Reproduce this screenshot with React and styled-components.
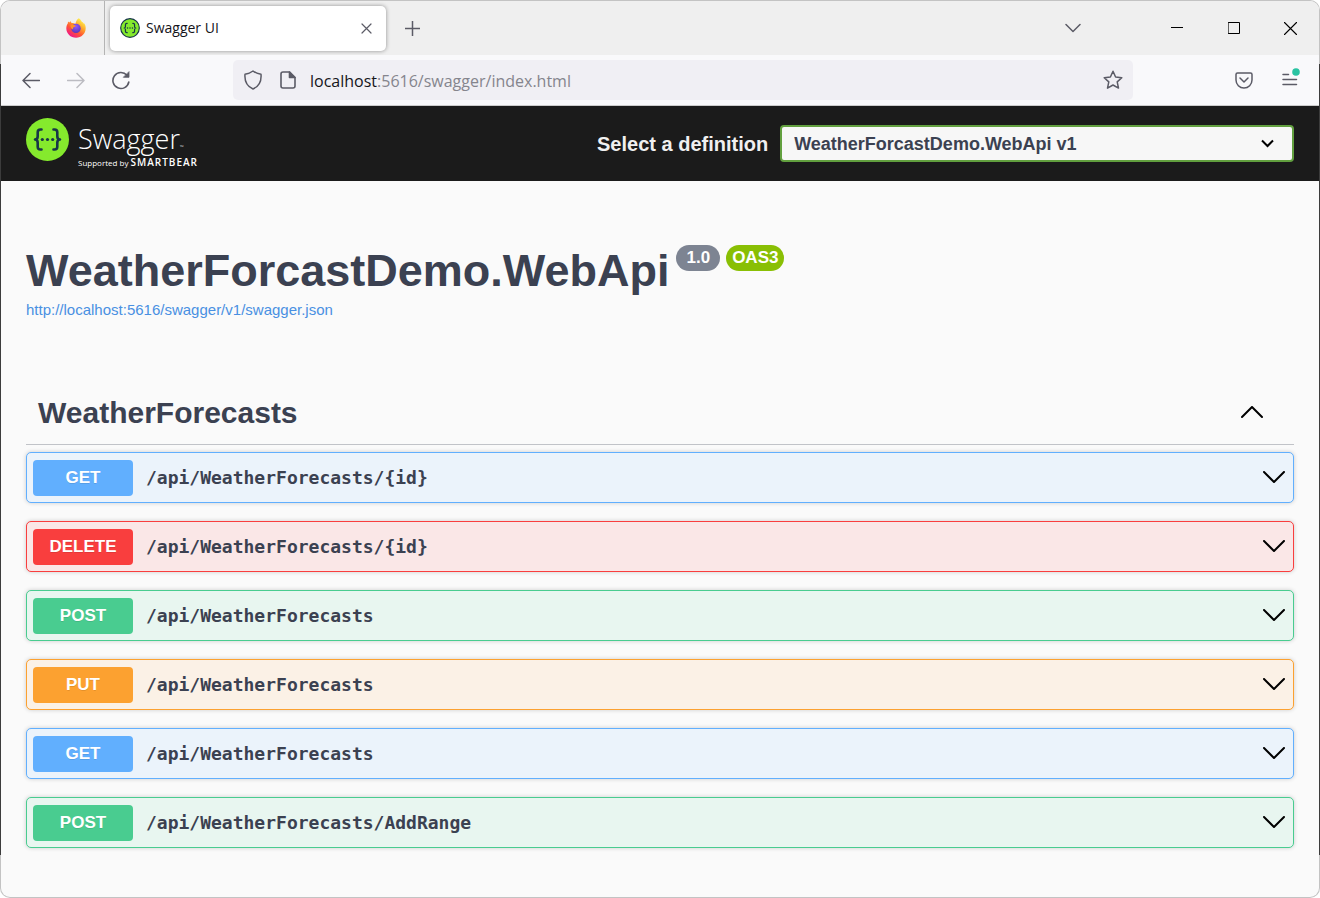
import { useState } from "react";
import styled, { createGlobalStyle } from "styled-components";

const GlobalStyle = createGlobalStyle`
  * {
    box-sizing: border-box;
  }
  body {
    margin: 0;
    background: #fff;
    color: #3b4151;
    font-family: "Liberation Sans", Arial, sans-serif;
  }
  button, input, select {
    font-family: inherit;
  }
`;

/* BROWSER WINDOW */

const Window = styled.div`
  display: flex;
  min-height: 100vh;
  padding: 1px;
  border-radius: 10px;
  background: linear-gradient(
    #c3c3c3 64px,
    #3c3c3c 64px,
    #3c3c3c calc(100% - 43px),
    #c3c3c3 calc(100% - 43px)
  );
`;

const WindowBody = styled.div`
  flex: 1;
  min-width: 0;
  display: flex;
  flex-direction: column;
  overflow: hidden;
  border-radius: 9px;
  background: #fafafa;
`;

const TabBar = styled.div`
  display: flex;
  align-items: center;
  height: 54px;
  background: #efefef;
`;

const PinnedTab = styled.div`
  display: flex;
  align-items: center;
  justify-content: flex-end;
  width: 104px;
  height: 100%;
  padding-right: 18px;
  border-right: 1px solid #b4b4b4;
`;

const Tab = styled.div`
  display: flex;
  align-items: center;
  gap: 6px;
  width: 276px;
  height: 45px;
  margin-left: 5px;
  padding: 0 12px 0 10px;
  border-radius: 5px;
  background: #fff;
  box-shadow: 0 0 4px rgba(0, 0, 0, 0.4);
`;

const TabTitle = styled.span`
  flex: 1;
  color: #15141a;
  font-family: "Open Sans", sans-serif;
  font-size: 14px;
  line-height: 20px;
`;

const IconButton = styled.button`
  display: flex;
  align-items: center;
  justify-content: center;
  flex: none;
  width: ${({ $width }) => $width || 20}px;
  height: 30px;
  padding: 0;
  border: none;
  background: none;
  color: ${({ $color }) => $color || "#5b5b66"};
`;

const TabActions = styled.div`
  display: flex;
  flex: 1;
  align-items: center;
  justify-content: space-between;
  padding-left: 12px;
`;

const WindowControls = styled.div`
  display: flex;
  align-items: center;
`;

const Toolbar = styled.div`
  display: flex;
  align-items: center;
  height: 51px;
  padding: 0 19px 0 7px;
  border-bottom: 1px solid #cccccc;
  background: #f9f9fb;
`;

const NavButtons = styled.div`
  display: flex;
  width: 225px;
`;

const AddressBar = styled.form`
  display: flex;
  flex: 1;
  align-items: center;
  height: 40px;
  padding: 0 10px;
  gap: 12px;
  border-radius: 5px;
  background: #f0eff4;
`;

const SiteButtons = styled.div`
  display: flex;
  gap: 15px;
`;

const Address = styled.a`
  flex: 1;
  padding-top: 2px;
  color: #85858d;
  font-family: "Open Sans", sans-serif;
  font-size: 16px;
  line-height: 24px;
  text-decoration: none;
  strong {
    color: #15141a;
    font-weight: 400;
  }
`;

const ToolbarMenu = styled.div`
  display: flex;
  gap: 26px;
  margin-left: 101px;
`;

/* SWAGGER PAGE */

const Topbar = styled.header`
  display: flex;
  align-items: center;
  justify-content: space-between;
  height: 75px;
  padding: 0 25px;
  background: #1b1b1b;
`;

const Brand = styled.a`
  display: flex;
  gap: 9px;
  color: #fff;
  text-decoration: none;
  font-family: "Open Sans", sans-serif;
`;

const BrandText = styled.span`
  display: flex;
  flex-direction: column;
  padding-top: 2px;
`;

const BrandName = styled.span`
  font-size: 27px;
  font-weight: 300;
  line-height: 37px;
  small {
    font-size: 5px;
    line-height: 1;
  }
`;

const BrandSupport = styled.span`
  font-size: 8px;
  line-height: 12px;
  white-space: nowrap;
  strong {
    font-size: 10px;
    font-weight: 600;
    line-height: 1;
    letter-spacing: 1px;
  }
`;

const DefinitionForm = styled.form`
  display: flex;
  align-items: center;
  gap: 12px;
  width: 697px;
`;

const DefinitionLabel = styled.label`
  color: #f0f0f0;
  font-size: 20px;
  font-weight: 700;
  line-height: 24px;
  white-space: nowrap;
`;

const SelectBox = styled.div`
  display: grid;
  flex: 1;
  align-items: center;
  svg {
    grid-area: 1 / 1;
    justify-self: end;
    margin-right: 20px;
    pointer-events: none;
  }
`;

const DefinitionSelect = styled.select`
  grid-area: 1 / 1;
  width: 100%;
  height: 37px;
  padding: 0 40px 0 12px;
  appearance: none;
  border: 2px solid #62a03f;
  border-radius: 4px;
  background: #f7f7f7;
  color: #3b4151;
  font-size: 18px;
  font-weight: 700;
`;

const Content = styled.main`
  display: flex;
  flex-direction: column;
  padding: 62px 25px 48px;
`;

const Info = styled.section`
  display: flex;
  flex-direction: column;
  align-items: flex-start;
`;

const TitleRow = styled.div`
  display: flex;
  gap: 7px;
`;

const Title = styled.h1`
  margin: 0;
  font-size: 45px;
  font-weight: 700;
  line-height: 56px;
`;

const Badges = styled.div`
  display: flex;
  gap: 6px;
  padding-top: 2px;
`;

const Badge = styled.span`
  height: 26px;
  padding: 0 ${({ $wide }) => ($wide ? 10 : 6)}px;
  border-radius: 26px;
  background: ${({ $color }) => $color};
  color: #fff;
  font-size: 17px;
  font-weight: 700;
  line-height: 26px;
`;

const SpecLink = styled.a`
  color: #4990e2;
  font-size: 15px;
  line-height: 22px;
  text-decoration: none;
`;

const TagHeader = styled.div`
  display: flex;
  align-items: center;
  justify-content: space-between;
  height: 63px;
  margin-top: 61px;
  padding: 0 30px 0 12px;
  border-bottom: 1px solid #c1c3c8;
`;

const TagTitle = styled.h2`
  margin: 0;
  font-size: 30px;
  font-weight: 700;
  line-height: 36px;
`;

const Operations = styled.ul`
  display: flex;
  flex-direction: column;
  gap: 18px;
  margin: 0;
  padding: 7px 0 0;
  list-style: none;
`;

const Operation = styled.li`
  border: 1px solid ${({ $color }) => $color};
  border-radius: 5px;
  background: ${({ $tint }) => $tint};
  box-shadow: 0 0 4px rgba(0, 0, 0, 0.19);
`;

const OperationButton = styled.button`
  display: flex;
  align-items: center;
  gap: 13px;
  width: 100%;
  height: 49px;
  padding: 0 8px 0 6px;
  border: none;
  background: none;
  color: #3b4151;
  text-align: left;
`;

const Method = styled.span`
  width: 100px;
  border-radius: 4px;
  background: ${({ $color }) => $color};
  color: #fff;
  font-size: 17px;
  font-weight: 700;
  line-height: 36px;
  text-align: center;
  text-shadow: 0 1px 0 rgba(0, 0, 0, 0.1);
`;

const Path = styled.span`
  flex: 1;
  font-family: "DejaVu Sans Mono", monospace;
  font-size: 18px;
  font-weight: 700;
  line-height: 24px;
`;

const METHODS = {
  GET: { color: "#61affe", tint: "#ebf3fb" },
  DELETE: { color: "#f93e3e", tint: "#fae7e7" },
  POST: { color: "#49cc90", tint: "#e8f6f0" },
  PUT: { color: "#fca130", tint: "#fbf1e6" },
};

const OPERATIONS = [
  { method: "GET", path: "/api/WeatherForecasts/{id}" },
  { method: "DELETE", path: "/api/WeatherForecasts/{id}" },
  { method: "POST", path: "/api/WeatherForecasts" },
  { method: "PUT", path: "/api/WeatherForecasts" },
  { method: "GET", path: "/api/WeatherForecasts" },
  { method: "POST", path: "/api/WeatherForecasts/AddRange" },
];

const ICONS = {
  close: "M1 1l9 9M10 1L1 10",
  plus: "M7.5 0v15M0 7.5h15",
  down: "M1 1.5l7 7 7-7",
  minimize: "M0 5.5h12",
  maximize: "M.5.5h11v11H.5z",
  exit: "M.5.5l12 12M12.5.5l-12 12",
  back: "M17.5 8.5H1M8 1.5l-7 7 7 7",
  forward: "M.5 8.5H17M10 1.5l7 7-7 7",
  shield: "M9 1c2.3 1.8 5 2.8 8 3.2C17.6 11 14.5 16.5 9 19 3.5 16.5.4 11 1 4.2 4 3.8 6.7 2.8 9 1z",
  star: "M10 1.2l2.6 5.8 6.2.7-4.6 4.2 1.3 6.2L10 15l-5.5 3.1 1.3-6.2L1.2 7.7l6.2-.7z",
};

function Icon({ name, width, height, stroke = 1.5 }) {
  return (
    <svg
      width={width}
      height={height}
      viewBox={`0 0 ${width} ${height}`}
      fill="none"
      stroke="currentColor"
      strokeWidth={stroke}
      strokeLinecap="round"
      strokeLinejoin="round"
      aria-hidden="true"
    >
      <path d={ICONS[name]} />
    </svg>
  );
}

function Chevron({ up }) {
  return (
    <svg
      width="22"
      height="14"
      viewBox="0 0 22 14"
      fill="none"
      stroke="#000"
      strokeWidth="2"
      strokeLinecap="round"
      strokeLinejoin="round"
      aria-hidden="true"
    >
      <path d={up ? "M1 11L11 1l10 10" : "M1 1l10 10L21 1"} />
    </svg>
  );
}

function SwaggerMark({ size, outlined }) {
  return (
    <svg width={size} height={size} viewBox="0 0 43 43" aria-hidden="true">
      <circle
        cx="21.5"
        cy="21.5"
        r={outlined ? 20 : 21.5}
        fill="#85ea2d"
        stroke={outlined ? "#173647" : "none"}
        strokeWidth="2.5"
      />
      <g fill="none" stroke="#173647" strokeWidth="2.6" strokeLinecap="round" strokeLinejoin="round">
        <path d="M15.5 11.5h-1c-2 0-2.8 1-2.8 2.8v4c0 2-1 3.2-2.7 3.2 1.7 0 2.7 1.2 2.7 3.2v4c0 1.8.8 2.8 2.8 2.8h1" />
        <path d="M27.5 11.5h1c2 0 2.8 1 2.8 2.8v4c0 2 1 3.2 2.7 3.2-1.7 0-2.7 1.2-2.7 3.2v4c0 1.8-.8 2.8-2.8 2.8h-1" />
      </g>
      <g fill="#173647">
        <circle cx="16.3" cy="21.5" r="1.6" />
        <circle cx="21.5" cy="21.5" r="1.6" />
        <circle cx="26.7" cy="21.5" r="1.6" />
      </g>
    </svg>
  );
}

function FirefoxLogo() {
  return (
    <svg width="20" height="20" viewBox="0 0 20 20" aria-label="Firefox">
      <defs>
        <linearGradient id="flame" x1=".85" y1=".1" x2=".25" y2=".95">
          <stop offset="0" stopColor="#fff44f" />
          <stop offset=".35" stopColor="#ffa62b" />
          <stop offset=".65" stopColor="#ff5535" />
          <stop offset="1" stopColor="#f0158a" />
        </linearGradient>
        <radialGradient id="globe" cx=".5" cy=".3" r=".7">
          <stop offset="0" stopColor="#9059ff" />
          <stop offset="1" stopColor="#5b35b5" />
        </radialGradient>
      </defs>
      <path
        fill="url(#flame)"
        d="M12.8.2c1.5 1 2.5 2.4 3 3.6 1 .4 1.6 1.2 2 1.9.2-.1.2-.4.1-.7 1.3 1.4 1.9 3.4 1.8 5.5-.2 5.2-4.3 9.3-9.6 9.3C4.6 19.8.3 15.6.3 10.3c0-2 .5-3.5 1.5-4.9l.2-2 1.2 1.2c.5-.6.9-1 1.6-1.4 0 .8.4 1.4.9 1.9 1.6-.2 2.8.1 3.7.8.7-2.6 1.4-4.6 3.4-5.7z"
      />
      <circle cx="10" cy="10.4" r="4.7" fill="url(#globe)" />
      <path
        fill="#ff9128"
        d="M4.5 7.2c2-.8 3.8-.2 5.3.5-.2 1-1.3 1.2-2.2 1.5-.8.4-.7 1.3-.2 2-1.6.5-3-1.5-2.9-4z"
      />
    </svg>
  );
}

function BrowserTabs() {
  return (
    <TabBar>
      <PinnedTab>
        <FirefoxLogo />
      </PinnedTab>
      <Tab>
        <SwaggerMark size={20} outlined />
        <TabTitle>Swagger UI</TabTitle>
        <IconButton $width={16} aria-label="Close tab">
          <Icon name="close" width={11} height={11} stroke={1.2} />
        </IconButton>
      </Tab>
      <TabActions>
        <IconButton $width={28} aria-label="New tab">
          <Icon name="plus" width={15} height={15} />
        </IconButton>
        <WindowControls>
          <IconButton $width={150} aria-label="List all tabs">
            <Icon name="down" width={16} height={10} />
          </IconButton>
          <IconButton $width={57} $color="#000" aria-label="Minimize">
            <Icon name="minimize" width={12} height={12} stroke={1} />
          </IconButton>
          <IconButton $width={57} $color="#000" aria-label="Maximize">
            <Icon name="maximize" width={12} height={12} stroke={1} />
          </IconButton>
          <IconButton $width={57} $color="#000" aria-label="Close">
            <Icon name="exit" width={13} height={13} stroke={1.1} />
          </IconButton>
        </WindowControls>
      </TabActions>
    </TabBar>
  );
}

function BrowserToolbar() {
  return (
    <Toolbar>
      <NavButtons>
        <IconButton $width={45} aria-label="Back">
          <Icon name="back" width={18} height={17} />
        </IconButton>
        <IconButton $width={45} $color="#bcbcc2" aria-label="Forward">
          <Icon name="forward" width={18} height={17} />
        </IconButton>
        <IconButton $width={45} aria-label="Reload">
          <svg
            width="20"
            height="20"
            viewBox="0 0 20 20"
            fill="none"
            stroke="currentColor"
            strokeWidth="1.6"
            strokeLinecap="round"
            aria-hidden="true"
          >
            <path d="M17.8 12A8 8 0 1 1 16 5.3" />
            <path d="M18 2v5.3h-5.3z" fill="currentColor" strokeWidth=".8" strokeLinejoin="round" />
          </svg>
        </IconButton>
      </NavButtons>
      <AddressBar>
        <SiteButtons>
          <IconButton type="button" aria-label="Tracking protection">
            <Icon name="shield" width={18} height={20} />
          </IconButton>
          <IconButton type="button" aria-label="Site information">
            <svg
              width="16"
              height="18"
              viewBox="0 0 16 18"
              fill="none"
              stroke="currentColor"
              strokeWidth="1.6"
              strokeLinejoin="round"
              aria-hidden="true"
            >
              <path d="M3 1h6.5L15 6.5V15a2 2 0 0 1-2 2H3a2 2 0 0 1-2-2V3a2 2 0 0 1 2-2z" />
              <path d="M9.5 1v5.5H15z" fill="currentColor" />
            </svg>
          </IconButton>
        </SiteButtons>
        <Address href="http://localhost:5616/swagger/index.html">
          <strong>localhost</strong>:5616/swagger/index.html
        </Address>
        <IconButton type="button" aria-label="Bookmark this page">
          <Icon name="star" width={20} height={20} />
        </IconButton>
      </AddressBar>
      <ToolbarMenu>
        <IconButton aria-label="Save to Pocket">
          <svg
            width="18"
            height="17"
            viewBox="0 0 18 17"
            fill="none"
            stroke="currentColor"
            strokeWidth="1.5"
            strokeLinecap="round"
            strokeLinejoin="round"
            aria-hidden="true"
          >
            <path d="M2.5 1h13A1.5 1.5 0 0 1 17 2.5V8A8 8 0 0 1 1 8V2.5A1.5 1.5 0 0 1 2.5 1z" />
            <path d="M5 6l4 4 4-4" />
          </svg>
        </IconButton>
        <IconButton aria-label="Open application menu">
          <svg
            width="20"
            height="24"
            viewBox="0 0 20 24"
            fill="none"
            stroke="currentColor"
            strokeWidth="1.5"
            strokeLinecap="round"
            aria-hidden="true"
          >
            <path d="M3 6.5h5.5M3 11.5h13.5M3 16.5h13.5" />
            <circle cx="16" cy="4" r="3.8" fill="#2ac3a2" stroke="none" />
          </svg>
        </IconButton>
      </ToolbarMenu>
    </Toolbar>
  );
}

function SwaggerTopbar() {
  const [definition, setDefinition] = useState("v1");

  return (
    <Topbar>
      <Brand href="#">
        <SwaggerMark size={43} />
        <BrandText>
          <BrandName>
            Swagger<small>™</small>
          </BrandName>
          <BrandSupport>
            Supported by <strong>SMARTBEAR</strong>
          </BrandSupport>
        </BrandText>
      </Brand>
      <DefinitionForm>
        <DefinitionLabel htmlFor="definition">Select a definition</DefinitionLabel>
        <SelectBox>
          <DefinitionSelect
            id="definition"
            value={definition}
            onChange={(e) => setDefinition(e.target.value)}
          >
            <option value="v1">WeatherForcastDemo.WebApi v1</option>
          </DefinitionSelect>
          <svg width="13" height="9" viewBox="0 0 13 9" fill="none" stroke="#000" strokeWidth="2" aria-hidden="true">
            <path d="M1 1.5l5.5 5.5L12 1.5" />
          </svg>
        </SelectBox>
      </DefinitionForm>
    </Topbar>
  );
}

function App() {
  const [isOpen, setIsOpen] = useState(true);

  return (
    <>
      <GlobalStyle />
      <Window>
        <WindowBody>
          <BrowserTabs />
          <BrowserToolbar />
          <SwaggerTopbar />
          <Content>
            <Info>
              <TitleRow>
                <Title>WeatherForcastDemo.WebApi</Title>
                <Badges>
                  <Badge $color="#7d8492" $wide>
                    1.0
                  </Badge>
                  <Badge $color="#89bf04">OAS3</Badge>
                </Badges>
              </TitleRow>
              <SpecLink href="http://localhost:5616/swagger/v1/swagger.json">
                http://localhost:5616/swagger/v1/swagger.json
              </SpecLink>
            </Info>

            <TagHeader>
              <TagTitle>WeatherForecasts</TagTitle>
              <IconButton
                $width={24}
                aria-label="Toggle operations"
                aria-expanded={isOpen}
                onClick={() => setIsOpen((open) => !open)}
              >
                <Chevron up={isOpen} />
              </IconButton>
            </TagHeader>
            {isOpen && (
              <Operations>
                {OPERATIONS.map(({ method, path }) => (
                  <Operation
                    key={method + path}
                    $color={METHODS[method].color}
                    $tint={METHODS[method].tint}
                  >
                    <OperationButton>
                      <Method $color={METHODS[method].color}>{method}</Method>
                      <Path>{path}</Path>
                      <Chevron />
                    </OperationButton>
                  </Operation>
                ))}
              </Operations>
            )}
          </Content>
        </WindowBody>
      </Window>
    </>
  );
}

export default App;
